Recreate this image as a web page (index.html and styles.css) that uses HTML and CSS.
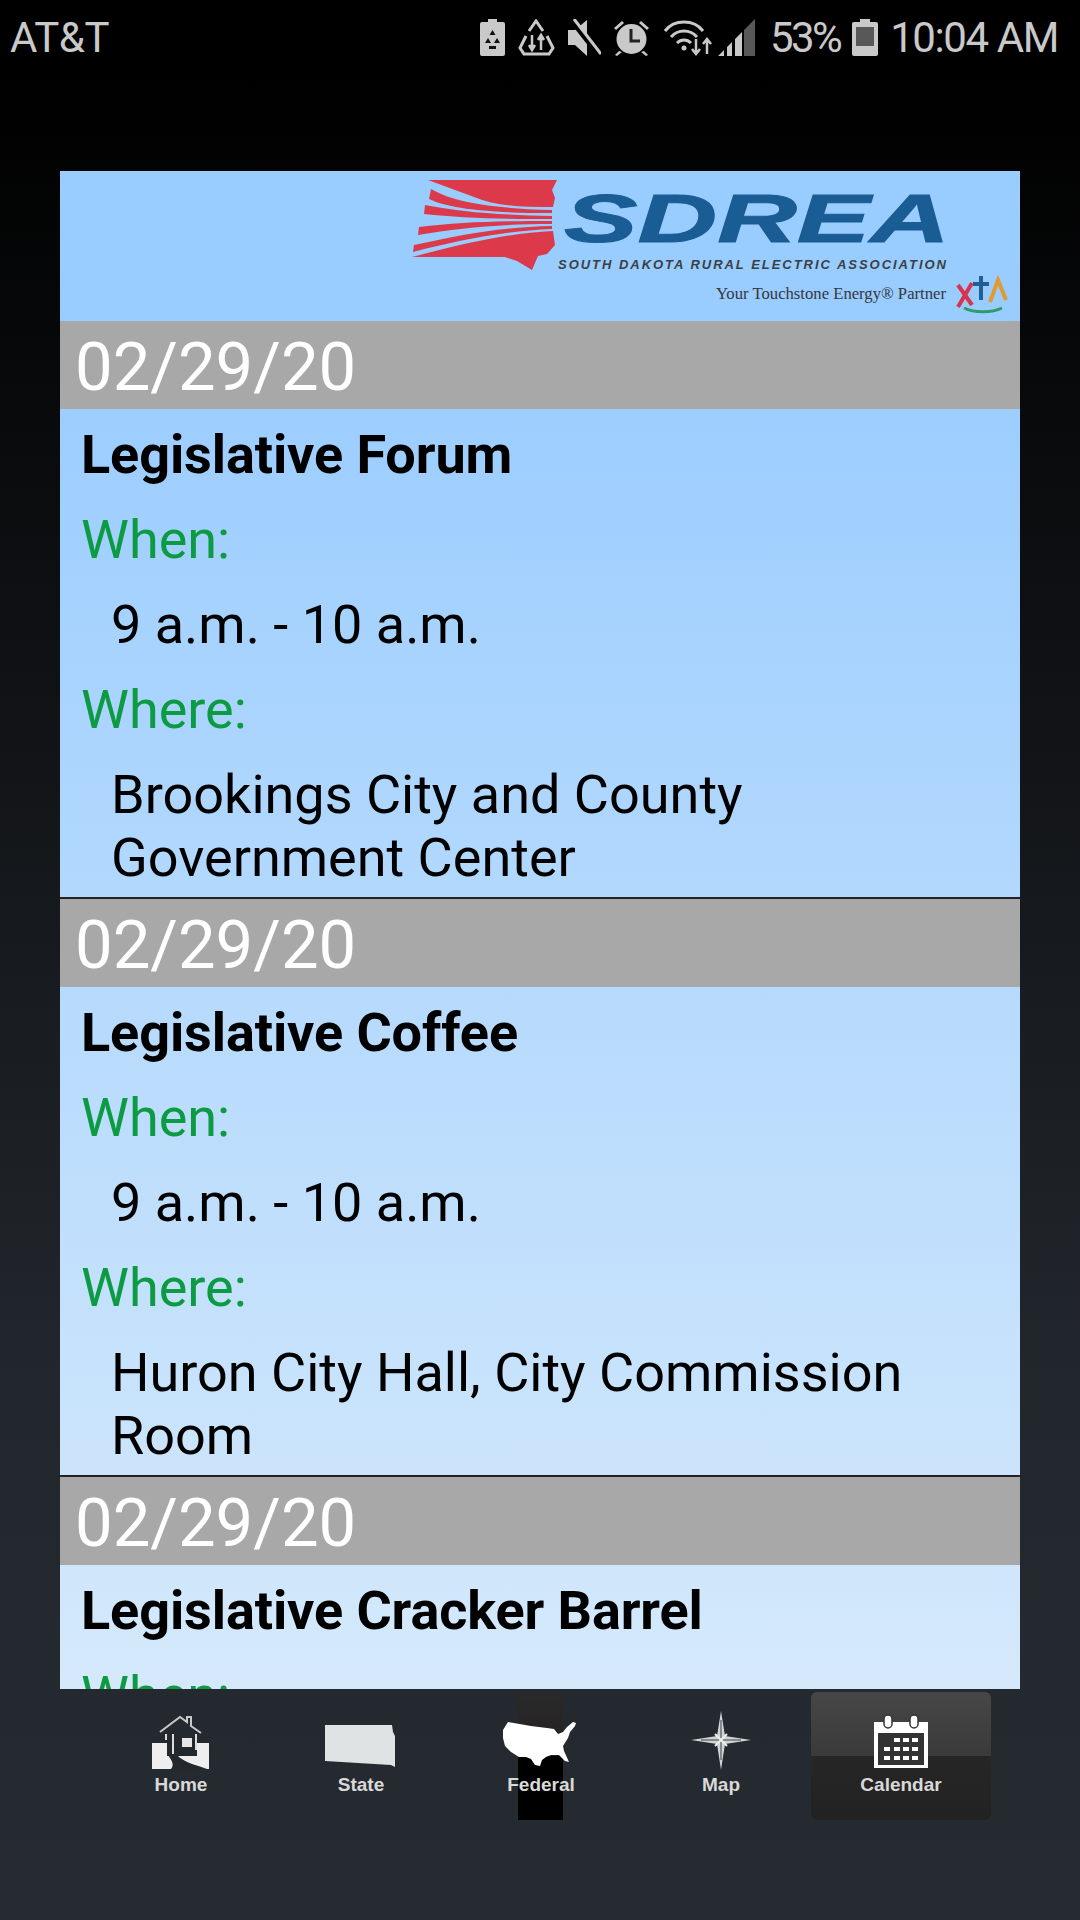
FILE: index.html
```html
<!DOCTYPE html>
<html lang="en">
<head>
    <meta charset="UTF-8">
    <meta name="viewport" content="width=device-width, initial-scale=1.0">
    <title>Calendar</title>
    <link rel="stylesheet" href="styles.css">
</head>
<body>
    <div class="status-bar">
        <span class="carrier">AT&amp;T</span>
        <div class="status-right">
            <svg class="st-icon" width="25" height="37" viewBox="0 0 25 37">
                <path d="M8 0h9v3h6a2 2 0 0 1 2 2v30a2 2 0 0 1-2 2H2a2 2 0 0 1-2-2V5a2 2 0 0 1 2-2h6z" fill="#c9c9c9"/>
                <path d="M12.5 11l3 5h-6zM8 19l3 5H5zM17 19l3 5h-6zM9 27h7v3H9z" fill="#111"/>
            </svg>
            <svg class="st-icon icon-recycle" width="37" height="37" viewBox="0 0 37 37" fill="none" stroke="#c9c9c9" stroke-width="3">
                <path d="M11 12l7-10 7 10"/>
                <path d="M8 17L2 29l4 6h25l4-6-6-12"/>
                <path d="M14 16v15M11 26l3 5 3-5M23 31V16M20 21l3-5 3 5" stroke-width="2.5"/>
            </svg>
            <svg class="st-icon icon-mute" width="33" height="37" viewBox="0 0 33 37">
                <path d="M0 11h7L19 1v36L7 26H0z" fill="#c9c9c9"/>
                <path d="M3 0l29 37" stroke="#000" stroke-width="6"/>
                <path d="M6 0l27 35" stroke="#c9c9c9" stroke-width="3"/>
            </svg>
            <svg class="st-icon icon-alarm" width="37" height="37" viewBox="0 0 37 37">
                <circle cx="18.5" cy="20" r="15" fill="#c9c9c9"/>
                <path d="M1 9l8-7 2 2-8 7zM36 9l-8-7-2 2 8 7zM6 32l-4 4 2 1 5-4zM31 32l4 4-2 1-5-4z" fill="#c9c9c9"/>
                <path d="M18 10v12h9" fill="none" stroke="#222" stroke-width="3"/>
            </svg>
            <svg class="st-icon icon-wifi" width="49" height="37" viewBox="0 0 49 37" fill="none" stroke="#c9c9c9" stroke-width="3">
                <path d="M1 12C10 0 30 0 39 12M7 18c7-8 19-8 26 0M13 24c4-4 10-4 14 0"/>
                <circle cx="20" cy="29" r="2.5" fill="#c9c9c9" stroke="none"/>
                <path d="M32 20v15M28 30l4 5 4-5M43 35V20M39 25l4-5 4 5" stroke-width="2.5"/>
            </svg>
            <svg class="st-icon icon-signal" width="37" height="37" viewBox="0 0 37 37">
                <path d="M0 37l6-6v6zM9 37V28l5-5v14zM17 37V20l7-7v24z" fill="#c9c9c9"/>
                <path d="M26 37V11L37 0v37z" fill="#585858"/>
            </svg>
            <span class="st-text pct">53%</span>
            <svg class="st-icon icon-batt" width="26" height="37" viewBox="0 0 26 37">
                <path d="M8 0h10v3h6a2 2 0 0 1 2 2v30a2 2 0 0 1-2 2H2a2 2 0 0 1-2-2V5a2 2 0 0 1 2-2h6z" fill="#c9c9c9"/>
                <rect x="4" y="8" width="18" height="19" fill="#585858"/>
            </svg>
            <span class="st-text clock">10:04 AM</span>
        </div>
    </div>

    <div class="panel">
        <div class="logo-row">
            <svg class="logo" width="620" height="150" viewBox="400 171 620 150">
                <g fill="#dc3a4b">
                    <path d="M428 180H557L552 190L555 198L553 207C520 207 495 206 474 197Z"/>
                    <path d="M431 189C450 200 480 208 552 210V213C490 213 450 209 429 199Z"/>
                    <path d="M425 205C460 212 500 215 552 216V219C500 219 460 218 424 214Z"/>
                    <path d="M419 227C460 222 500 221 552 221V224C500 224 460 228 418 235Z"/>
                    <path d="M414 245C460 235 500 227 552 226V229C505 231 460 240 413 252Z"/>
                    <path d="M412 257C470 242 510 233 553 231L555 245L547 254L538 256L532 270L517 261L505 257Z"/>
                </g>
                <text class="logo-name" x="564" y="242" textLength="386" lengthAdjust="spacingAndGlyphs">SDREA</text>
                <text class="logo-sub" x="558" y="269" textLength="388" lengthAdjust="spacing">SOUTH DAKOTA RURAL ELECTRIC ASSOCIATION</text>
                <text class="logo-tag" x="716" y="299" textLength="230" lengthAdjust="spacingAndGlyphs">Your Touchstone Energy® Partner</text>
                <path d="M958 285l14 20M972 283l-14 24" stroke="#d9344a" stroke-width="4" fill="none"/>
                <path d="M981 276v24M973 284h16" stroke="#1d5f96" stroke-width="4" fill="none"/>
                <path d="M990 302l8-22 8 20" stroke="#e09a33" stroke-width="4" fill="none"/>
                <path d="M964 308c10 5 28 5 38 0" stroke="#2f9a6a" stroke-width="3" fill="none"/>
            </svg>
        </div>

        <div class="event">
            <div class="event-date">02/29/20</div>
            <div class="event-body">
                <div class="event-title">Legislative Forum</div>
                <div class="event-label">When:</div>
                <div class="event-value">9 a.m. - 10 a.m.</div>
                <div class="event-label">Where:</div>
                <div class="event-value">Brookings City and County Government Center</div>
            </div>
        </div>

        <div class="event">
            <div class="event-date">02/29/20</div>
            <div class="event-body">
                <div class="event-title">Legislative Coffee</div>
                <div class="event-label">When:</div>
                <div class="event-value">9 a.m. - 10 a.m.</div>
                <div class="event-label">Where:</div>
                <div class="event-value">Huron City Hall, City Commission Room</div>
            </div>
        </div>

        <div class="event">
            <div class="event-date">02/29/20</div>
            <div class="event-body">
                <div class="event-title">Legislative Cracker Barrel</div>
                <div class="event-label">When:</div>
            </div>
        </div>
    </div>

    <div class="tab-bar">
        <div class="tab">
            <svg width="80" height="60" viewBox="0 0 80 60">
                <path d="M11 33H68V59H11Z" fill="#eeeeee"/>
                <path d="M26 30H56V46H26Z" fill="#23282f"/>
                <path d="M27 45H36C42 52 55 55 66 59H30C34 54 30 50 27 45Z" fill="#23282f"/>
                <path d="M19 22L39 7L46 12V7H50V16L60 23" fill="none" stroke="#c9c9c9" stroke-width="2"/>
                <path d="M25 24V30M32 24V44M55 24V40" fill="none" stroke="#dcdcdc" stroke-width="2"/>
                <rect x="41" y="28" width="10" height="9" fill="#e6e6e6"/>
            </svg>
            <span class="tab-label">Home</span>
        </div>
        <div class="tab">
            <svg width="80" height="60" viewBox="0 0 80 60">
                <path d="M4 15H71L72 22L74 26V57L70 55L4 51Z" fill="#dfe3e3"/>
            </svg>
            <span class="tab-label">State</span>
        </div>
        <div class="tab tab-federal">
            <svg width="80" height="60" viewBox="0 0 80 60">
                <path d="M7 12L30 16L46 18L53 19L57 24L62 22L66 17L72 12L75 13L74 16L69 22L67 28L62 36L63 41L68 52L64 51L58 45L50 45L45 47L41 50L39 56L34 55L30 49L25 47L18 47L10 42L4 36L2 28L2 20Z" fill="#ffffff"/>
            </svg>
            <span class="tab-label">Federal</span>
        </div>
        <div class="tab">
            <svg width="80" height="60" viewBox="0 0 80 60">
                <path d="M40 1L44 26L70 30L44 34L40 60L36 34L10 30L36 26Z" fill="#d0d4d4"/>
                <path d="M40 10V50M20 30H60" stroke="#6d7175" stroke-width="1.5"/>
                <path d="M34 24L46 36M46 24L34 36" stroke="#eeeeee" stroke-width="2"/>
            </svg>
            <span class="tab-label">Map</span>
        </div>
        <div class="tab tab-active">
            <svg width="80" height="60" viewBox="0 0 80 60">
                <path d="M13 12H67V58H13Z" fill="#ffffff"/>
                <rect x="17" y="23" width="46" height="32" fill="#333333"/>
                <rect x="23" y="5" width="8" height="13" rx="4" fill="#ffffff" stroke="#333" stroke-width="1.5"/>
                <rect x="49" y="5" width="8" height="13" rx="4" fill="#ffffff" stroke="#333" stroke-width="1.5"/>
                <path class="cal-dots" d="M33 28h6v4h-6zM42 28h6v4h-6zM51 28h6v4h-6zM23 37h6v4h-6zM33 37h6v4h-6zM42 37h6v4h-6zM51 37h6v4h-6zM23 46h6v4h-6zM33 46h6v4h-6zM42 46h6v4h-6zM51 46h6v4h-6z"/>
            </svg>
            <span class="tab-label">Calendar</span>
        </div>
    </div>
</body>
</html>
```

FILE: styles.css
```css
html, body {
    margin: 0;
    padding: 0;
}

body {
    width: 1080px;
    height: 1920px;
    overflow: hidden;
    font-family: Roboto, sans-serif;
    background: linear-gradient(#000000 4%, #22272d 72%, #262b32 100%);
}

.status-bar {
    height: 75px;
    padding: 0 22px 0 10px;
    display: flex;
    justify-content: space-between;
    align-items: center;
    box-sizing: border-box;
    color: #c9c9c9;
    font-size: 42px;
}

.carrier {
    letter-spacing: -0.5px;
}

.status-right {
    display: flex;
    align-items: center;
}

.st-icon {
    flex: none;
}

.icon-recycle {
    margin-left: 13px;
}

.icon-mute {
    margin-left: 13px;
}

.icon-alarm {
    margin-left: 12px;
}

.icon-wifi {
    margin-left: 14px;
}

.icon-signal {
    margin-left: 5px;
}

.pct {
    margin-left: 15px;
    letter-spacing: -2.6px;
}

.icon-batt {
    margin-left: 12px;
}

.clock {
    margin-left: 12px;
    letter-spacing: -1.4px;
}

.panel {
    margin: 96px 60px 0;
    height: 1518px;
    overflow: hidden;
    background: linear-gradient(#99ccff 10%, #d5e9fb 100%);
}

.logo-row {
    height: 150px;
    display: flex;
    justify-content: flex-end;
}

.logo-name {
    font-family: "Liberation Sans", sans-serif;
    font-weight: bold;
    font-style: italic;
    font-size: 68px;
    fill: #1a5c94;
    stroke: #1a5c94;
    stroke-width: 1px;
}

.logo-sub {
    font-family: "Liberation Sans", sans-serif;
    font-weight: bold;
    font-style: italic;
    font-size: 13px;
    fill: #3a3f45;
}

.logo-tag {
    font-family: "Liberation Serif", serif;
    font-size: 17px;
    fill: #33383c;
}

.event {
    border-bottom: 2px solid #222222;
}

.event-date {
    height: 88px;
    padding-left: 15px;
    background-color: #a8a8a8;
    color: #ffffff;
    font-size: 67px;
    line-height: 92px;
}

.event-body {
    padding: 14px 21px 8px;
    font-size: 54px;
    line-height: 63px;
}

.event-title {
    font-weight: bold;
    color: #000000;
    margin-bottom: 22px;
    letter-spacing: -0.1px;
}

.event-label {
    color: #0c9a42;
    margin-bottom: 22px;
}

.event-value {
    color: #000000;
    margin-bottom: 22px;
    padding-left: 30px;
    padding-right: 90px;
}

.event-value:last-child {
    margin-bottom: 0;
}

.tab-bar {
    margin: 3px 30px 0 91px;
    display: flex;
}

.tab {
    position: relative;
    width: 180px;
    height: 128px;
    padding-top: 18px;
    box-sizing: border-box;
    display: flex;
    flex-direction: column;
    align-items: center;
}

.tab svg,
.tab-label {
    position: relative;
}

.tab-label {
    margin-top: 3px;
    font-family: "Liberation Sans", sans-serif;
    font-weight: bold;
    font-size: 19px;
    line-height: 24px;
    color: #d9d9d9;
}

/* the odd black strip behind Federal */
.tab-federal::before {
    content: "";
    position: absolute;
    left: 67px;
    top: 0;
    width: 45px;
    height: 128px;
    background: linear-gradient(#2a2a2a, #241f1f 50%, #000000 50%);
}

.tab-active {
    border-radius: 6px;
    background: linear-gradient(#474747, #3a3a3a 50%, #262626 50%, #222222);
}

.cal-dots {
    fill: #ffffff;
}
```
